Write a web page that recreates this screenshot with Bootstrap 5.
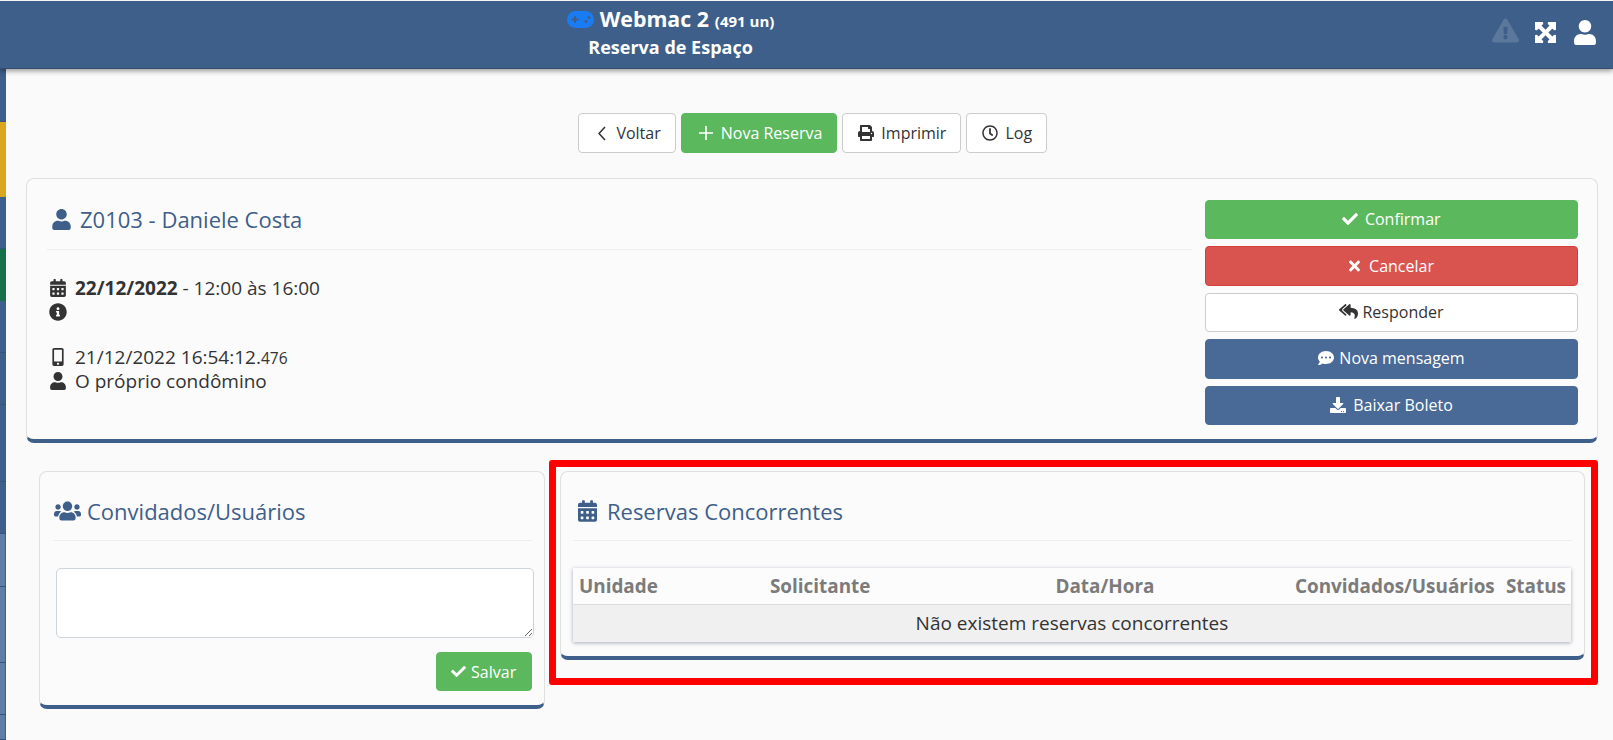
<!DOCTYPE html>
<html lang="pt-BR">
<head>
<meta charset="utf-8">
<title>Reserva de Espaço</title>
<link href="https://cdn.jsdelivr.net/npm/bootstrap@5.3.0/dist/css/bootstrap.min.css" rel="stylesheet">
<style>
html,body{height:740px;overflow:hidden}
body{background:#fafafa;font-family:"Open Sans","Noto Sans",sans-serif;color:#333;font-size:19px;line-height:24px}
.ico{width:1em;height:1em;fill:currentColor;flex:none;vertical-align:-.125em}
.topbar{height:69px;background:#3e5f8a;border-top:1px solid #f4f6f8;border-bottom:1px solid #35506f;box-shadow:0 2px 5px rgba(0,0,0,.4);position:relative;z-index:2;color:#fff}
.brand-col{text-align:center;font-weight:700;padding-right:3px}
.brand-main{font-size:21.3px;line-height:28px;margin-top:4px;display:flex;justify-content:center;align-items:center;height:28px}
.brand-main svg{width:27px;height:17px;margin:1px 6px 0 0}
.pad-body{fill:#1a7cf2}
.pad-mark{fill:#3e5f8a}
.brand-main small{font-size:15px;margin-left:6px;margin-top:3px}
.brand-sub{font-size:18px;line-height:24px;margin-top:2px}
.top-icons{padding-right:17px;height:100%;align-items:center;padding-bottom:4px}
.top-warn{width:27px;height:27px;opacity:.15;color:#fff;margin-right:16px;margin-bottom:4px}
.top-x{width:21px;height:21px;margin-right:18px;overflow:visible;stroke:#fff;stroke-width:30;stroke-linejoin:round}
.top-u{width:22px;height:25px}
.rail{width:6px;flex:none;height:671px}
.seg{border-bottom:1px solid #35547b;background:#3e5f8a}
.seg.gold{background:#daa520;border-color:#daa520}
.seg.grn{background:#167049;border-color:#167049}
.seg.pale{background:#5f7ea6;border-right:1px solid #3e5f8a}
.h53{height:53px}.h75{height:75px}.h52{height:52px}.h77{height:77px}.h76{height:76px}.h25{height:25px}
.work{padding:44px 15px 0 19.5px;min-width:0}
.acts{margin-bottom:25px;gap:5px;padding-left:2px}
.btn.bx{font-size:16px;line-height:20px;padding:0 14px 0 15px;border-radius:4px;height:40px;display:inline-flex;align-items:center;justify-content:center;gap:7px;white-space:nowrap}
.btn.b-white{background:#fff;border-color:#ccc;color:#333}
.btn.b-green{background:#5cb85c;border-color:#5cb85c;color:#fff}
.btn.b-red{background:#d9534f;border-color:#d43f3a;color:#fff}
.btn.b-blue{background:#496a96;border-color:#496a96;color:#fff}
.acts svg{width:16px;height:16px}
.acts svg.chev{fill:none;width:8px;height:15px;margin:0 3px 0 4px;stroke:currentColor;stroke-width:1.6}
.acts svg.plus{fill:none;width:14px;height:14px;margin:0 1px 0 2px;stroke:currentColor;stroke-width:1.7}
.panel{background:#fbfbfb;border:1px solid #e0e0e0;border-bottom:4px solid #3e5f8a;border-radius:8px}
.panel-a{height:265px;padding:21px 19px 0 20.5px;gap:13px;margin-bottom:17px}
.headline{color:#3e5f8a;font-size:22px;line-height:28px;display:flex;align-items:center;border-bottom:1px solid #eee}
.hl-a{height:50px;padding:0 0 11px 4.5px;gap:9.5px;margin-bottom:26px}
.hl-a svg{width:19px;height:21px}
.info-line{display:flex;align-items:center;gap:8.5px;height:24px;padding-left:1.5px}
.info-line svg{width:18px;height:18px}
.gap-line{height:21px}
.ms{font-size:15.5px;padding-top:2px}
.stack{width:373px;flex:none;gap:7px}
.stack .btn.bx{height:39.4px;width:100%;gap:5px;padding:0 0 1px}
.stack svg{width:16px;height:16px}
.stack .btn.bx.gp6{gap:6.5px}
.stack .btn.bx.gp4{gap:4px}
.stack .btn.bx.gp7{gap:7px}
.stack .btn.bx.gp9{gap:9px}
.stack svg.sx{width:11px}
.stack svg.sr{width:19px;height:17px}
.pane-left{padding:11px 5px 0 13.5px}
.pane-right{padding:11px 13px 0 10.3px;position:relative}
.panel-b{height:238px;padding:13px 12px 0 13px}
.panel-c{height:189px;padding:13px 12px 0}
.hl-b{height:56px;padding-bottom:3px;margin-bottom:27px;gap:6px;padding-left:1px}
.hl-b svg.ug{width:27px;height:22px}
.hl-b svg.cal{width:19px;height:22px;margin:0 4px 0 4px}
.memo.form-control{display:block;width:478px;height:70px;margin:0 0 14px 3px;border:1px solid #cdd4dc;border-radius:5px;background:#fff;box-shadow:none}
.btn.bx.save{width:96px;height:39px;gap:5px;padding:0}
.btn.save svg{width:15px;height:15px}
.grid-box{box-shadow:0 1px 4px rgba(60,80,110,.45);background:#fff;table-layout:fixed;margin:0;width:998px}
.grid-box th{color:#7b7b7b;font-size:18.9px;line-height:24px;font-weight:700;padding:5.5px 7px;height:36px;background:#fcfcfc;border-bottom:1px solid #ddd;white-space:nowrap;overflow:visible}
.grid-box td{background:#f0f0f0;font-size:19px;line-height:24px;padding:6px;height:37.5px;text-align:center;color:#333;border:0}
.grid-box th.w-a,.grid-box th.w-d{padding-left:6px}
.w-a{width:190px}.w-b{width:158px}.w-c{width:368px}.w-d{width:210px}.w-e{width:72px}
.red-frame{position:absolute;left:-1px;right:0;top:0;height:225px;border:7px solid #f00;border-radius:3px;pointer-events:none}
</style>
</head>
<body>
<svg width="0" height="0" class="d-block position-absolute">
<symbol id="i-user" viewBox="0 0 448 512"><path d="M224 256c70.7 0 128-57.3 128-128S294.7 0 224 0 96 57.3 96 128s57.3 128 128 128zm89.6 32h-16.7c-22.2 10.2-46.9 16-72.9 16s-50.6-5.8-72.9-16h-16.7C60.2 288 0 348.2 0 422.4V464c0 26.5 21.5 48 48 48h352c26.5 0 48-21.5 48-48v-41.6c0-74.2-60.2-134.4-134.4-134.4z"/></symbol>
<symbol id="i-cal" viewBox="0 0 448 512"><path d="M0 464c0 26.5 21.5 48 48 48h352c26.5 0 48-21.5 48-48V192H0v272zm320-196c0-6.6 5.4-12 12-12h40c6.6 0 12 5.4 12 12v40c0 6.6-5.4 12-12 12h-40c-6.6 0-12-5.4-12-12v-40zm0 128c0-6.6 5.4-12 12-12h40c6.6 0 12 5.4 12 12v40c0 6.6-5.4 12-12 12h-40c-6.6 0-12-5.4-12-12v-40zM192 268c0-6.6 5.4-12 12-12h40c6.6 0 12 5.4 12 12v40c0 6.6-5.4 12-12 12h-40c-6.6 0-12-5.4-12-12v-40zm0 128c0-6.6 5.4-12 12-12h40c6.6 0 12 5.4 12 12v40c0 6.6-5.4 12-12 12h-40c-6.6 0-12-5.4-12-12v-40zM64 268c0-6.6 5.4-12 12-12h40c6.6 0 12 5.4 12 12v40c0 6.6-5.4 12-12 12H76c-6.6 0-12-5.4-12-12v-40zm0 128c0-6.6 5.4-12 12-12h40c6.6 0 12 5.4 12 12v40c0 6.6-5.4 12-12 12H76c-6.6 0-12-5.4-12-12v-40zM400 64h-48V16c0-8.8-7.2-16-16-16h-32c-8.8 0-16 7.2-16 16v48H160V16c0-8.8-7.2-16-16-16h-32c-8.8 0-16 7.2-16 16v48H48C21.5 64 0 85.5 0 112v48h448v-48c0-26.5-21.5-48-48-48z"/></symbol>
<symbol id="i-info" viewBox="0 0 512 512"><path d="M256 8C119.043 8 8 119.083 8 256c0 136.997 111.043 248 248 248s248-111.003 248-248C504 119.083 392.957 8 256 8zm0 110c23.196 0 42 18.804 42 42s-18.804 42-42 42-42-18.804-42-42 18.804-42 42-42zm56 254c0 6.627-5.373 12-12 12h-88c-6.627 0-12-5.373-12-12v-24c0-6.627 5.373-12 12-12h12v-64h-12c-6.627 0-12-5.373-12-12v-24c0-6.627 5.373-12 12-12h64c6.627 0 12 5.373 12 12v100h12c6.627 0 12 5.373 12 12v24z"/></symbol>
<symbol id="i-mob" viewBox="0 0 320 512"><path d="M272 0H48C21.5 0 0 21.5 0 48v416c0 26.5 21.5 48 48 48h224c26.5 0 48-21.5 48-48V48c0-26.5-21.5-48-48-48zM160 480c-17.7 0-32-14.3-32-32s14.3-32 32-32 32 14.3 32 32-14.3 32-32 32zm112-108c0 6.6-5.4 12-12 12H60c-6.6 0-12-5.4-12-12V60c0-6.6 5.4-12 12-12h200c6.6 0 12 5.4 12 12v312z"/></symbol>
<symbol id="i-check" viewBox="0 0 512 512"><path d="M173.898 439.404l-166.4-166.4c-9.997-9.997-9.997-26.206 0-36.204l36.203-36.204c9.997-9.998 26.207-9.998 36.204 0L192 312.69 432.095 72.596c9.997-9.997 26.207-9.997 36.204 0l36.203 36.204c9.997 9.997 9.997 26.206 0 36.204l-294.4 294.401c-9.998 9.997-26.207 9.997-36.204-.001z"/></symbol>
<symbol id="i-x" viewBox="0 0 352 512"><path d="M242.72 256l100.07-100.07c12.28-12.28 12.28-32.19 0-44.48l-22.24-22.24c-12.28-12.28-32.19-12.28-44.48 0L176 189.28 75.93 89.21c-12.28-12.28-32.19-12.28-44.48 0L9.21 111.45c-12.28 12.28-12.28 32.19 0 44.48L109.28 256 9.21 356.07c-12.28 12.28-12.28 32.19 0 44.48l22.24 22.24c12.28 12.28 32.2 12.28 44.48 0L176 322.72l100.07 100.07c12.28 12.28 32.2 12.28 44.48 0l22.24-22.24c12.28-12.28 12.28-32.19 0-44.48L242.72 256z"/></symbol>
<symbol id="i-reply" viewBox="0 0 576 512"><path d="M136.309 189.836L312.313 37.851C327.72 24.546 352 35.348 352 56.015v82.763c129.182 10.231 224 52.212 224 183.548 0 61.441-39.582 122.309-83.333 154.132-13.653 9.931-33.111-2.533-28.077-18.631 38.512-123.162-3.922-169.482-112.59-182.015v84.175c0 20.701-24.3 31.453-39.687 18.164L136.309 226.164c-11.071-9.561-11.086-26.753 0-36.328zm-128 36.328L184.313 378.15C199.7 391.439 224 380.687 224 359.986v-15.818l-108.606-93.785A55.96 55.96 0 0 1 96 207.998a55.953 55.953 0 0 1 19.393-42.38L224 71.832V56.015c0-20.667-24.28-31.469-39.687-18.164L8.309 189.836c-11.086 9.575-11.071 26.767 0 36.328z"/></symbol>
<symbol id="i-msg" viewBox="0 0 512 512"><path d="M256 32C114.6 32 0 125.1 0 240c0 49.6 21.4 95 57 130.7C44.5 421.1 2.7 466 2.2 466.5c-2.2 2.3-2.8 5.7-1.5 8.7S4.8 480 8 480c66.3 0 116-31.8 140.6-51.4 32.7 12.3 69 19.4 107.4 19.4 141.4 0 256-93.1 256-208S397.4 32 256 32zM128 272c-17.7 0-32-14.3-32-32s14.3-32 32-32 32 14.3 32 32-14.3 32-32 32zm128 0c-17.7 0-32-14.3-32-32s14.3-32 32-32 32 14.3 32 32-14.3 32-32 32zm128 0c-17.7 0-32-14.3-32-32s14.3-32 32-32 32 14.3 32 32-14.3 32-32 32z"/></symbol>
<symbol id="i-dl" viewBox="0 0 512 512"><path d="M216 0h80c13.3 0 24 10.7 24 24v168h87.7c17.8 0 26.7 21.5 14.1 34.1L269.7 378.3c-7.5 7.5-19.8 7.5-27.3 0L90.1 226.1c-12.6-12.6-3.7-34.1 14.1-34.1H192V24c0-13.3 10.7-24 24-24zm296 376v112c0 13.3-10.7 24-24 24H24c-13.3 0-24-10.7-24-24V376c0-13.3 10.7-24 24-24h146.7l49 49c20.1 20.1 52.5 20.1 72.6 0l49-49H488c13.3 0 24 10.7 24 24zm-124 88c0-11-9-20-20-20s-20 9-20 20 9 20 20 20 20-9 20-20zm64 0c0-11-9-20-20-20s-20 9-20 20 9 20 20 20 20-9 20-20z"/></symbol>
<symbol id="i-print" viewBox="0 0 512 512"><path d="M448 192V77.25c0-8.49-3.37-16.62-9.37-22.63L393.37 9.37c-6-6-14.14-9.37-22.63-9.37H96C78.33 0 64 14.33 64 32v160c-35.35 0-64 28.65-64 64v112c0 8.84 7.16 16 16 16h48v96c0 17.67 14.33 32 32 32h320c17.67 0 32-14.33 32-32v-96h48c8.84 0 16-7.16 16-16V256c0-35.35-28.65-64-64-64zm-64 256H128v-96h256v96zm0-224H128V64h192v48c0 8.84 7.16 16 16 16h48v96zm48 72c-13.25 0-24-10.75-24-24 0-13.26 10.75-24 24-24s24 10.74 24 24c0 13.25-10.75 24-24 24z"/></symbol>
<symbol id="i-clock" viewBox="0 0 512 512"><path d="M256 8C119 8 8 119 8 256s111 248 248 248 248-111 248-248S393 8 256 8zm0 448c-110.5 0-200-89.5-200-200S145.5 56 256 56s200 89.5 200 200-89.5 200-200 200zm61.8-104.4l-84.9-61.7c-3.1-2.3-4.9-5.9-4.9-9.7V116c0-6.6 5.4-12 12-12h32c6.6 0 12 5.4 12 12v141.7l66.8 48.6c5.4 3.9 6.5 11.4 2.6 16.8L334.6 349c-3.9 5.3-11.4 6.5-16.8 2.6z"/></symbol>
<symbol id="i-users" viewBox="0 0 640 512"><path d="M96 224c35.3 0 64-28.7 64-64s-28.7-64-64-64-64 28.7-64 64 28.7 64 64 64zm448 0c35.3 0 64-28.7 64-64s-28.7-64-64-64-64 28.7-64 64 28.7 64 64 64zm32 32h-64c-17.6 0-33.5 7.1-45.1 18.6 40.3 22.1 68.9 62 75.1 109.4h66c17.7 0 32-14.3 32-32v-32c0-35.3-28.7-64-64-64zm-256 0c61.9 0 112-50.1 112-112S381.9 32 320 32 208 82.1 208 144s50.1 112 112 112zm76.8 32h-8.3c-20.8 10-43.9 16-68.5 16s-47.6-6-68.5-16h-8.3C179.6 288 128 339.6 128 403.2V432c0 26.5 21.5 48 48 48h288c26.5 0 48-21.5 48-48v-28.8c0-63.6-51.6-115.2-115.2-115.2zm-223.7-13.4C161.5 263.1 145.6 256 128 256H64c-35.3 0-64 28.7-64 64v32c0 17.7 14.3 32 32 32h65.9c6.3-47.4 34.9-87.3 75.2-109.4z"/></symbol>
<symbol id="i-warn" viewBox="0 0 576 512"><path d="M569.517 440.013C587.975 472.007 564.806 512 527.94 512H48.054c-36.937 0-59.999-40.055-41.577-71.987L246.423 24.035c18.467-32.009 64.72-31.951 83.154 0l239.94 416.978zM288 354c-25.405 0-46 20.595-46 46s20.595 46 46 46 46-20.595 46-46-20.595-46-46-46zm-43.673-165.346l7.418 136c.347 6.364 5.609 11.346 11.982 11.346h48.546c6.373 0 11.635-4.982 11.982-11.346l7.418-136c.375-6.874-5.098-12.654-11.982-12.654h-63.383c-6.884 0-12.356 5.78-11.981 12.654z"/></symbol>
<symbol id="i-exp" viewBox="0 32 448 448"><path d="M448 344v112a23.94 23.94 0 0 1-24 24H312c-21.39 0-32.09-25.9-17-41l36.2-36.2L224 295.6 116.77 402.9 153 439c15.09 15.1 4.39 41-17 41H24a23.94 23.94 0 0 1-24-24V344c0-21.4 25.89-32.1 41-17l36.19 36.2L184.46 256 77.18 148.7 41 185c-15.1 15.1-41 4.4-41-17V56a23.94 23.94 0 0 1 24-24h112c21.39 0 32.09 25.9 17 41l-36.2 36.2L224 216.4l107.23-107.3L295 73c-15.09-15.1-4.39-41 17-41h112a23.94 23.94 0 0 1 24 24v112c0 21.4-25.89 32.1-41 17l-36.19-36.2L263.54 256l107.28 107.3L407 327.1c15.1-15.2 41-4.5 41 16.9z"/></symbol>
</svg>

<header class="topbar row g-0">
  <div class="col-10 brand-col">
    <div class="brand-main"><svg class="ico" viewBox="0 0 27 17"><rect class="pad-body" width="27" height="17" rx="8.5"/><path class="pad-mark" d="M7 5h2v2.5h2.500v2H9V12H7V9.500H4.500v-2H7z"/><circle class="pad-mark" cx="19" cy="10.500" r="1.600"/><circle class="pad-mark" cx="22" cy="6.500" r="1.600"/></svg>Webmac 2<small>(491 un)</small></div>
    <div class="brand-sub">Reserva de Espaço</div>
  </div>
  <div class="col-2 d-flex justify-content-end top-icons">
    <svg class="ico top-warn"><use href="#i-warn"/></svg>
    <svg class="ico top-x"><use href="#i-exp"/></svg>
    <svg class="ico top-u"><use href="#i-user"/></svg>
  </div>
</header>

<div class="d-flex">
  <aside class="rail d-flex flex-column">
    <div class="seg h53"></div><div class="seg gold h75"></div><div class="seg h52"></div><div class="seg grn h52"></div>
    <div class="seg h52"></div><div class="seg h52"></div><div class="seg h77"></div><div class="seg h52"></div>
    <div class="seg pale h53"></div><div class="seg pale h76"></div><div class="seg pale h52"></div><div class="seg pale h25"></div>
  </aside>

  <main class="work flex-grow-1">
    <div class="d-flex justify-content-center acts">
      <button class="btn bx b-white" type="button"><svg class="ico chev" viewBox="0 0 8 15"><path d="M7 1 1 7.500 7 14"/></svg>Voltar</button>
      <button class="btn bx b-green" type="button"><svg class="ico plus" viewBox="0 0 14 14"><path d="M7 0v14M0 7h14"/></svg>Nova Reserva</button>
      <button class="btn bx b-white" type="button"><svg class="ico"><use href="#i-print"/></svg>Imprimir</button>
      <button class="btn bx b-white" type="button"><svg class="ico"><use href="#i-clock"/></svg>Log</button>
    </div>

    <section class="panel panel-a d-flex">
      <div class="flex-grow-1">
        <div class="headline hl-a"><svg class="ico"><use href="#i-user"/></svg><span>Z0103 - Daniele Costa</span></div>
        <div class="info-line"><svg class="ico"><use href="#i-cal"/></svg><span><b>22/12/2022</b> - 12:00 às 16:00</span></div>
        <div class="info-line"><svg class="ico"><use href="#i-info"/></svg></div>
        <div class="gap-line"></div>
        <div class="info-line"><svg class="ico"><use href="#i-mob"/></svg><span>21/12/2022 16:54:12.<small class="ms">476</small></span></div>
        <div class="info-line"><svg class="ico"><use href="#i-user"/></svg><span>O próprio condômino</span></div>
      </div>
      <div class="stack d-flex flex-column">
        <button class="btn bx b-green gp6" type="button"><svg class="ico"><use href="#i-check"/></svg>Confirmar</button>
        <button class="btn bx b-red gp9" type="button"><svg class="ico sx"><use href="#i-x"/></svg>Cancelar</button>
        <button class="btn bx b-white gp4" type="button"><svg class="ico sr"><use href="#i-reply"/></svg>Responder</button>
        <button class="btn bx b-blue" type="button"><svg class="ico"><use href="#i-msg"/></svg>Nova mensagem</button>
        <button class="btn bx b-blue gp7" type="button"><svg class="ico"><use href="#i-dl"/></svg>Baixar Boleto</button>
      </div>
    </section>

    <div class="row g-0">
      <div class="col-4 pane-left">
        <section class="panel panel-b">
          <div class="headline hl-b"><svg class="ico ug"><use href="#i-users"/></svg><span>Convidados/Usuários</span></div>
          <textarea class="form-control memo" aria-label="Convidados"></textarea>
          <div class="d-flex justify-content-end"><button class="btn bx b-green save" type="button"><svg class="ico"><use href="#i-check"/></svg>Salvar</button></div>
        </section>
      </div>
      <div class="col-8 pane-right">
        <section class="panel panel-c">
          <div class="headline hl-b"><svg class="ico cal"><use href="#i-cal"/></svg><span>Reservas Concorrentes</span></div>
          <table class="table grid-box">
            <thead><tr><th class="w-a">Unidade</th><th class="w-b">Solicitante</th><th class="w-c text-center">Data/Hora</th><th class="w-d">Convidados/Usuários</th><th class="w-e">Status</th></tr></thead>
            <tbody><tr><td colspan="5">Não existem reservas concorrentes</td></tr></tbody>
          </table>
        </section>
        <div class="red-frame"></div>
      </div>
    </div>
  </main>
</div>
<script src="https://cdn.jsdelivr.net/npm/bootstrap@5.3.0/dist/js/bootstrap.bundle.min.js"></script>
</body>
</html>
